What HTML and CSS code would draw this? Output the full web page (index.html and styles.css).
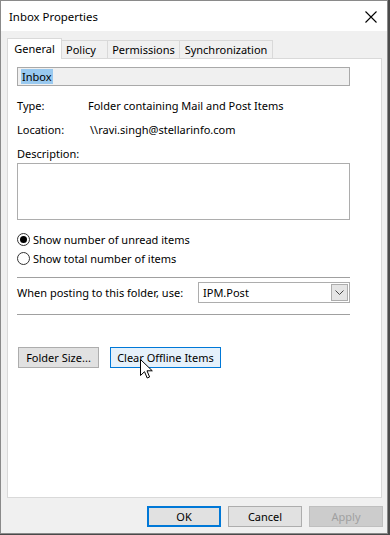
FILE: index.html
```html
<!DOCTYPE html>
<html lang="en">
  <head>
    <meta charset="UTF-8">
    <title>Inbox Properties</title>
    <link rel="stylesheet" href="styles.css">
  </head>
  <body>
    <div class="window">
      <div class="titlebar">
        <span class="title">Inbox Properties</span>
        <svg class="close" width="12" height="12" viewBox="0 0 12 12"><path d="M0.5 0.5L11.5 11.5M11.5 0.5L0.5 11.5" stroke="#000" stroke-width="1.1"/></svg>
      </div>

      <div class="client">
        <div class="tabs">
          <div class="tab selected">General</div>
          <div class="tab t-policy">Policy</div>
          <div class="tab t-perm">Permissions</div>
          <div class="tab t-sync">Synchronization</div>
        </div>

        <div class="panel">
          <div class="namebox"><span class="sel">Inbox</span></div>

          <div class="info">
            <span class="label">Type:</span>
            <span>Folder containing Mail and Post Items</span>
          </div>
          <div class="info">
            <span class="label">Location:</span>
            <span class="loc">\\ravi.singh@stellarinfo.com</span>
          </div>

          <div class="desc-label">Description:</div>
          <div class="desc"></div>

          <div class="radios">
            <div class="radio"><span class="dot on"></span>Show number of unread items</div>
            <div class="radio"><span class="dot"></span>Show total number of items</div>
          </div>

          <hr class="sep">
          <div class="posting">
            <span>When posting to this folder, use:</span>
            <div class="combo">
              <span>IPM.Post</span>
              <span class="arrow"><svg width="9" height="5" viewBox="0 0 9 5"><path d="M0.5 0.5L4.5 4.5L8.5 0.5" fill="none" stroke="#444" stroke-width="1"/></svg></span>
            </div>
          </div>
          <hr class="sep">

          <div class="actions">
            <button class="btn size">Folder Size...</button>
            <button class="btn hot">Clear Offline Items</button>
            <svg class="cursor" width="13" height="20" viewBox="0 0 13 20"><path d="M0.5 0.5V16.5L4.5 12.7L7.2 19L9.6 18L7 11.8H12.3Z" fill="#fff" stroke="#000" stroke-width="1" stroke-linejoin="miter"/></svg>
          </div>
        </div>

        <div class="footer">
          <button class="btn wide default">OK</button>
          <button class="btn wide">Cancel</button>
          <button class="btn wide disabled">Apply</button>
        </div>
      </div>
    </div>
  </body>
</html>
```

FILE: styles.css
```css
body { margin: 0; background: #4a4a4a; font-family: "Noto Sans", sans-serif; font-size: 11px; color: #000 }

.window { width: 386px; height: 532px; border: 1px solid #8a8a8a; background: #f0f0f0;
  display: flex; flex-direction: column }
.titlebar { height: 30px; background: #fff; display: flex; align-items: center;
  justify-content: space-between; padding: 0 10px 0 8px }
.title { font-size: 11.4px }
.close { margin-top: 1px }

.client { flex: 1; display: flex; flex-direction: column; padding: 7px 5px 0 6px }
.tabs { display: flex; align-items: flex-end; height: 20px; position: relative; z-index: 1 }
.tab { height: 18px; line-height: 17px; border: 1px solid #d9d9d9; border-bottom: none;
  background: #f0f0f0; box-sizing: border-box; margin-left: -1px; text-align: center; white-space: nowrap }
.tab.selected { width: 55px; height: 21px; background: #fff; margin-left: 0; margin-bottom: -1px;
  line-height: 19px }
.t-policy { width: 47px; text-align: left; padding-left: 4px }
.t-perm { width: 73px }
.t-sync { width: 94px }

.panel { height: 440px; background: #fff; border: 1px solid #d9d9d9; box-sizing: border-box;
  padding: 8px 31px 0 9px; display: flex; flex-direction: column }

.namebox { height: 19px; border: 1px solid #a9a9a9; background: #f0f0f0; box-sizing: border-box;
  display: flex; align-items: center; padding-left: 3px }
.sel { background: #99c9ef; line-height: 15px; padding: 0 1px }

.info { display: flex; margin-top: 13px; height: 13px; line-height: 13px }
.info + .info { margin-top: 11px }
.label { width: 71px }
.loc { margin-left: 2px }

.desc-label { margin-top: 11px; line-height: 13px }
.desc { height: 57px; margin-top: 3px; border: 1px solid #adadad; box-sizing: border-box; background: #fff }

.radios { margin-top: 10px }
.radio { display: flex; align-items: center; height: 19px }
.dot { width: 13px; height: 13px; border: 1px solid #333; border-radius: 50%; box-sizing: border-box;
  margin-right: 3px; display: flex; align-items: center; justify-content: center }
.dot.on::after { content: ""; width: 7px; height: 7px; border-radius: 50%; background: #000 }

.sep { border: none; border-top: 1px solid #a0a0a0; margin: 0; height: 0 }
.radios + .sep { margin-top: 9px }
.posting { display: flex; align-items: center; justify-content: space-between; height: 21px;
  margin: 4px 0 11px; white-space: nowrap }
.combo { width: 152px; height: 21px; border: 1px solid #adadad; box-sizing: border-box; display: flex;
  align-items: center; justify-content: space-between; padding: 0 1px 0 4px; background: #fff }
.arrow { width: 17px; height: 17px; background: #e5e5e5; border: 1px solid #adadad; box-sizing: border-box;
  display: flex; align-items: center; justify-content: center }

.actions { display: flex; margin-top: 32px; position: relative }
.btn { font: inherit; color: #000; height: 21px; border: 1px solid #adadad; background: #e1e1e1;
  padding: 0; margin: 0; box-sizing: border-box; white-space: nowrap }
.btn.size { width: 81px; margin-left: 1px }
.btn.hot { margin-left: 11px; border-color: #0078d7; background: #e5f1fb; width: 111px }
.cursor { position: absolute; left: 123px; top: 12px }

.footer { display: flex; justify-content: flex-end; gap: 7px; padding: 8px 0 0; margin-right: -1px }
.btn.wide { width: 74px }
.btn.default { border: 2px solid #0078d7 }
.btn.disabled { background: #cccccc; border-color: #bfbfbf; color: #a0a0a0 }
```
